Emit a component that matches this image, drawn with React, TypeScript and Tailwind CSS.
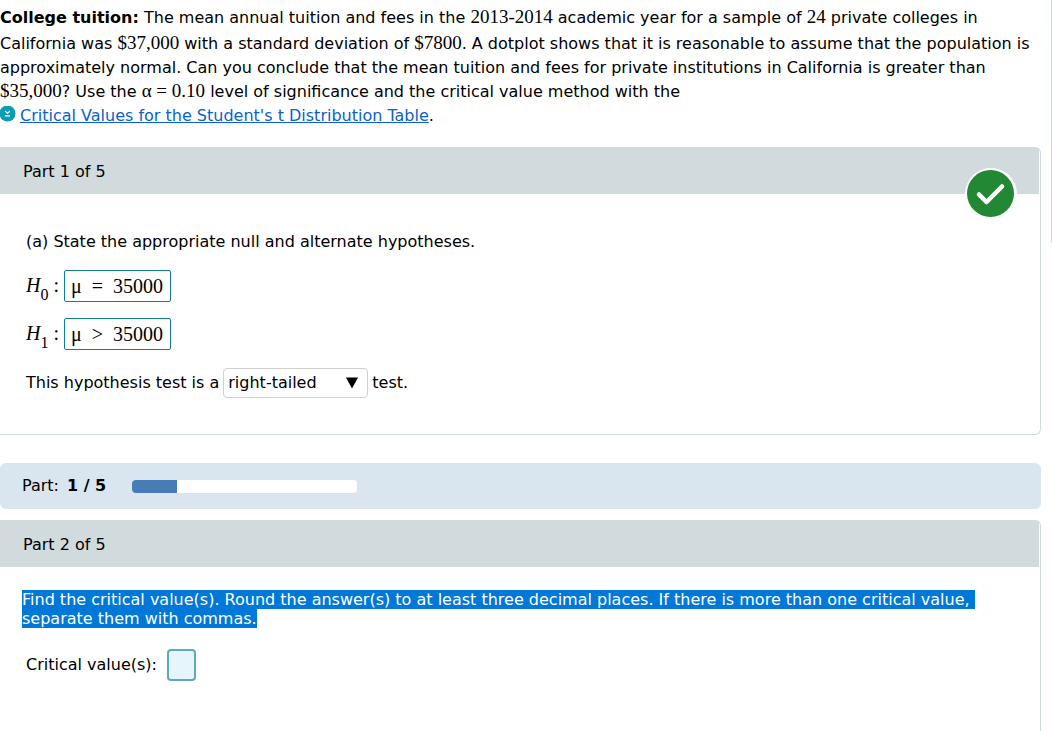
import type { ReactNode } from 'react';

function Num({ children }: { children: ReactNode }) {
  return <span className="font-['Liberation_Serif',serif] text-[19px] leading-none">{children}</span>;
}

function Panel({ title, children, className }: { title: string; children: ReactNode; className: string }) {
  return (
    <section className={`relative border-t border-r border-[#d1dadc] rounded-tr-md pr-px ${className}`}>
      <h2 className="h-[46px] pl-[23px] pt-px flex items-center bg-[#d1dadc]">{title}</h2>
      {children}
    </section>
  );
}

const hypotheses = [
  { id: 'h0', sub: '0', value: 'μ  =  35000' },
  { id: 'h1', sub: '1', value: 'μ  >  35000' },
];

export default function App() {
  const part = 1;
  const total = 5;

  return (
    <div className="h-screen overflow-hidden flex gap-[10px] bg-white text-black font-['DejaVu_Sans',Verdana,sans-serif] text-base">
      <main className="flex-1 min-w-0 flex flex-col">
        <p className="pt-[6px] leading-6 whitespace-nowrap">
          <span className="block pb-0.5">
            <b>College tuition:</b> The mean annual tuition and fees in the <Num>2013-2014</Num> academic year for a
            sample of <Num>24</Num> private colleges in
          </span>
          California was <Num>$37,000</Num> with a standard deviation of <Num>$7800</Num>. A dotplot shows that it is
          reasonable to assume that the population is
          <br />
          approximately normal. Can you conclude that the mean tuition and fees for private institutions in California
          is greater than
          <br />
          <Num>$35,000</Num>? Use the <Num>α = 0.10</Num> level of significance and the critical value method with the
        </p>
        <p className="flex items-center gap-1 leading-6">
          <svg viewBox="0 0 16 16" className="w-4 h-4 -mt-1" aria-hidden="true">
            <circle cx="7.5" cy="7.5" r="8" fill="#0a9bb5" />
            <path d="M5 5l2.5 2.2L10 5M5 9.8h5" fill="none" stroke="#fff" strokeWidth="1.2" />
          </svg>
          <span>
            <a href="#table" className="text-[#0b62c9] underline">
              Critical Values for the Student's t Distribution Table
            </a>
            .
          </span>
        </p>

        <Panel title="Part 1 of 5" className="mt-[19px] border-b rounded-br-md pb-9">
          <svg viewBox="0 0 52 52" className="absolute right-[23px] top-5 w-[52px] h-[52px]" aria-label="Correct">
            <circle cx="26" cy="26" r="26" fill="#fff" />
            <circle cx="25.5" cy="25.5" r="23.5" fill="#228833" />
            <path
              d="M14 26.5l7.5 7.5 15.5-15.5"
              fill="none"
              stroke="#fff"
              strokeWidth="4.5"
              strokeLinecap="round"
              strokeLinejoin="round"
            />
          </svg>
          <div className="pt-9 pl-[26px]">
            <p className="leading-6">(a) State the appropriate null and alternate hypotheses.</p>
            <div className="mt-4 flex flex-col gap-4">
              {hypotheses.map(h => (
                <div key={h.id} className="flex items-center h-8 font-['Liberation_Serif',serif] text-xl">
                  <label htmlFor={h.id} className="w-[38px] leading-8">
                    <i>H</i>
                    <span className="inline-block align-[-8px] text-base leading-none">{h.sub}</span> :
                  </label>
                  <input
                    id={h.id}
                    readOnly
                    value={h.value}
                    className="w-[107px] h-8 px-[6px] rounded-xs border border-[#0f7f8f]"
                  />
                </div>
              ))}
            </div>
            <div className="mt-[18px] flex items-center gap-1">
              <label htmlFor="tail">This hypothesis test is a</label>
              <div className="relative">
                <select
                  id="tail"
                  defaultValue="right"
                  className="appearance-none w-[145px] h-[30px] px-1 rounded-sm border border-[#d0d0d0] bg-white"
                >
                  <option value="right">right-tailed</option>
                  <option value="left">left-tailed</option>
                  <option value="two">two-tailed</option>
                </select>
                <svg viewBox="0 0 12 12" className="absolute right-[10px] top-[9px] w-3 h-3 pointer-events-none">
                  <path d="M0 0.5h12L6 11.5z" />
                </svg>
              </div>
              <span>test.</span>
            </div>
          </div>
        </Panel>

        <div className="mt-7 h-[46px] shrink-0 pl-[22px] flex items-center rounded-md bg-[#dae6ef]">
          <div className="w-[110px] flex gap-2">
            Part:
            <b>
              {part} / {total}
            </b>
          </div>
          <div className="w-[225px] h-[13px] rounded-sm bg-white overflow-hidden">
            <div className="h-full bg-[#477cb6]" style={{ width: `${(part / total) * 100}%` }} />
          </div>
        </div>

        <Panel title="Part 2 of 5" className="mt-[11px] flex-1">
          <p className="pt-[23px] pl-[22px] leading-[19px] text-white whitespace-nowrap">
            <span className="block w-fit bg-[#0078d7]">
              Find the critical value(s). Round the answer(s) to at least three decimal places. If there is more than
              one critical value,&nbsp;
            </span>
            <span className="block w-fit bg-[#0078d7]">separate them with commas.</span>
          </p>
          <div className="mt-[21px] pl-[26px] flex items-center gap-[10px]">
            <label htmlFor="critical">Critical value(s):</label>
            <input
              id="critical"
              className="w-[29px] h-8 rounded-sm border-2 border-[#5cacb8] bg-[#e6f5f9] outline-none"
            />
          </div>
        </Panel>
      </main>
      <div className="w-px h-[243px] bg-[#d1dadc]" />
    </div>
  );
}
